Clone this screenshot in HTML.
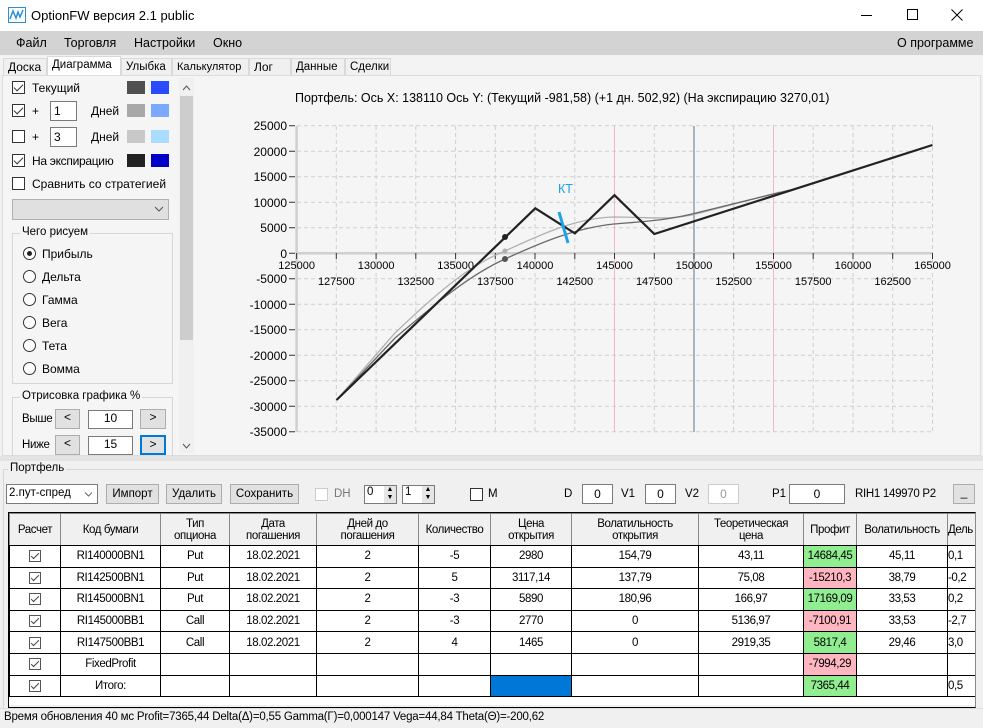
<!DOCTYPE html>
<html><head><meta charset="utf-8"><style>
*{box-sizing:border-box;margin:0;padding:0}
body{width:983px;height:728px;overflow:hidden;background:#f0f0f0;font-family:"Liberation Sans","DejaVu Sans",sans-serif;font-size:12px;color:#000;position:relative}
.a{position:absolute}
.cb{position:absolute;width:13px;height:13px;border:1px solid #333;background:#fff}
.cb.on::after{content:"";position:absolute;left:3px;top:0px;width:4px;height:8px;border:solid #333;border-width:0 1.5px 1.5px 0;transform:rotate(45deg)}
.tc{display:inline-block;position:relative;width:12px;height:12px;border:1px solid #555;background:#fff;vertical-align:middle}
.tc::after{content:"";position:absolute;left:3px;top:0px;width:3px;height:7px;border:solid #444;border-width:0 1px 1px 0;transform:rotate(45deg)}
.rb{position:absolute;width:13px;height:13px;border:1px solid #333;border-radius:50%;background:#fff}
.rb.on::after{content:"";position:absolute;left:3px;top:3px;width:5px;height:5px;border-radius:50%;background:#222}
.sw{position:absolute;width:18px;height:13px}
.inp{position:absolute;background:#fff;border:1px solid #7a7a7a;text-align:center;font-size:12px}
.btn{position:absolute;background:#e1e1e1;border:1px solid #adadad;text-align:center;font-size:12px}
.tab{position:absolute;top:58px;height:17px;border:1px solid #d9d9d9;border-bottom:none;background:#f0f0f0;font-size:12px;line-height:16px;padding:0 4px}
table{border-collapse:collapse;table-layout:fixed;font-size:11.5px}
td{border:1px solid #000;text-align:center;height:21.6px;background:#fff;white-space:nowrap;overflow:hidden;letter-spacing:-0.4px}
th{border:1px solid #888;font-weight:normal;background:#f0f0f0;height:32px;font-size:11.5px;line-height:12px;letter-spacing:-0.4px;border-bottom:1px solid #000}
.g{background:#90ee90}.r{background:#ffb6c1}
</style></head><body>
<div class="a" style="left:0;top:0;width:983px;height:31px;background:#fff"></div>
<svg class="a" style="left:8px;top:7px" width="18" height="16" viewBox="0 0 18 16"><rect x="0.5" y="0.5" width="17" height="15" fill="#fff" stroke="#2a8fd8"/><path d="M2 12 L5 4 L8 11 L10 5 L12 10 L15 3" stroke="#2a8fd8" stroke-width="1.5" fill="none"/></svg>
<div class="a" style="left:31px;top:8px;font-size:13px">OptionFW версия 2.1 public</div>
<div class="a" style="left:861px;top:15px;width:11px;height:1px;background:#000"></div>
<div class="a" style="left:907px;top:9px;width:11px;height:11px;border:1px solid #000"></div>
<svg class="a" style="left:951px;top:9px" width="12" height="12"><path d="M0.5 0.5L11.5 11.5M11.5 0.5L0.5 11.5" stroke="#000"/></svg>
<div class="a" style="left:0;top:31px;width:983px;height:24px;background:#d3d3d3"></div>
<div class="a" style="left:16px;top:36px;font-size:12.5px">Файл</div>
<div class="a" style="left:64px;top:36px;font-size:12.5px">Торговля</div>
<div class="a" style="left:134px;top:36px;font-size:12.5px">Настройки</div>
<div class="a" style="left:213px;top:36px;font-size:12.5px">Окно</div>
<div class="a" style="left:897px;top:36px;font-size:12.5px">О программе</div>
<div class="a" style="left:0;top:55px;width:983px;height:20px;background:#f3f3f3"></div>
<div class="tab" style="left:3px;width:44px">Доска</div>
<div class="tab" style="left:47px;top:56px;height:20px;width:74px;background:#fff;font-size:11.5px">Диаграмма</div>
<div class="tab" style="left:121px;width:51px;font-size:11.5px">Улыбка</div>
<div class="tab" style="left:172px;width:77px;font-size:11px">Калькулятор</div>
<div class="tab" style="left:249px;width:42px">Лог</div>
<div class="tab" style="left:291px;width:54px;font-size:11.5px">Данные</div>
<div class="tab" style="left:345px;width:46px;font-size:11.5px">Сделки</div>
<div class="a" style="left:2px;top:75px;width:979px;height:381px;background:#f5f5f5;border:1px solid #ddd"></div>
<div class="cb on" style="left:12px;top:81px"></div><div class="a" style="left:32px;top:81px">Текущий</div>
<div class="sw" style="left:127px;top:81px;background:#505050"></div><div class="sw" style="left:151px;top:81px;background:#2a4cff"></div>
<div class="cb on" style="left:12px;top:104px"></div><div class="a" style="left:32px;top:104px">+</div>
<div class="inp" style="left:50px;top:101px;width:27px;height:20px;text-align:left;padding-left:3px;line-height:18px">1</div>
<div class="a" style="left:91px;top:104px">Дней</div>
<div class="sw" style="left:127px;top:104px;background:#a8a8a8"></div><div class="sw" style="left:151px;top:104px;background:#7aa9ff"></div>
<div class="cb" style="left:12px;top:130px"></div><div class="a" style="left:32px;top:130px">+</div>
<div class="inp" style="left:50px;top:127px;width:27px;height:20px;text-align:left;padding-left:3px;line-height:18px">3</div>
<div class="a" style="left:91px;top:130px">Дней</div>
<div class="sw" style="left:127px;top:130px;background:#c8c8c8"></div><div class="sw" style="left:151px;top:130px;background:#aadcff"></div>
<div class="cb on" style="left:12px;top:154px"></div><div class="a" style="left:32px;top:154px;letter-spacing:-0.3px">На экспирацию</div>
<div class="sw" style="left:127px;top:154px;background:#222"></div><div class="sw" style="left:151px;top:154px;background:#0000c8"></div>
<div class="cb" style="left:12px;top:177px"></div><div class="a" style="left:32px;top:177px">Сравнить со стратегией</div>
<div class="a" style="left:12px;top:199px;width:157px;height:21px;background:#e0e0e0;border:1px solid #b0b0b0"></div>
<svg class="a" style="left:154px;top:206px" width="10" height="6"><path d="M1 1L5 5L9 1" stroke="#555" fill="none"/></svg>
<div class="a" style="left:12px;top:233px;width:161px;height:151px;border:1px solid #d6d6d6"></div>
<div class="a" style="left:20px;top:226px;background:#f5f5f5;padding:0 2px;font-size:11.5px">Чего рисуем</div>
<div class="rb on" style="left:23px;top:247px"></div><div class="a" style="left:42px;top:247px">Прибыль</div>
<div class="rb" style="left:23px;top:270px"></div><div class="a" style="left:42px;top:270px">Дельта</div>
<div class="rb" style="left:23px;top:293px"></div><div class="a" style="left:42px;top:293px">Гамма</div>
<div class="rb" style="left:23px;top:316px"></div><div class="a" style="left:42px;top:316px">Вега</div>
<div class="rb" style="left:23px;top:339px"></div><div class="a" style="left:42px;top:339px">Тета</div>
<div class="rb" style="left:23px;top:362px"></div><div class="a" style="left:42px;top:362px">Вомма</div>
<div class="a" style="left:12px;top:397px;width:161px;height:60px;border:1px solid #d6d6d6;border-bottom:none"></div>
<div class="a" style="left:20px;top:390px;background:#f5f5f5;padding:0 2px;font-size:11.5px">Отрисовка графика %</div>
<div class="a" style="left:22px;top:413px;font-size:11.5px;letter-spacing:-0.3px">Выше</div>
<div class="btn" style="left:55px;top:409px;width:25px;height:20px">&lt;</div>
<div class="inp" style="left:88px;top:410px;width:45px;height:19px">10</div>
<div class="btn" style="left:140px;top:409px;width:26px;height:20px">&gt;</div>
<div class="a" style="left:22px;top:439px;font-size:11.5px;letter-spacing:-0.3px">Ниже</div>
<div class="btn" style="left:55px;top:435px;width:25px;height:20px">&lt;</div>
<div class="inp" style="left:88px;top:436px;width:45px;height:19px">15</div>
<div class="btn" style="left:140px;top:435px;width:26px;height:20px;border:2px solid #0078d7">&gt;</div>
<div class="a" style="left:179px;top:78px;width:15px;height:375px;background:#f0f0f0"></div>
<div class="a" style="left:180px;top:96px;width:13px;height:244px;background:#cdcdcd"></div>
<svg class="a" style="left:182px;top:85px" width="9" height="6"><path d="M1 5L4.5 1L8 5" stroke="#555" fill="none"/></svg>
<svg class="a" style="left:182px;top:443px" width="9" height="6"><path d="M1 1L4.5 5L8 1" stroke="#555" fill="none"/></svg>
<svg class="a" style="left:0;top:0" width="983" height="460" font-family="Liberation Sans, sans-serif" font-size="12">
<text x="295" y="102" font-size="12.5">Портфель: Ось X: 138110 Ось Y:  (Текущий -981,58)  (+1 дн. 502,92)  (На экспирацию 3270,01)</text>
<g stroke="#cfcfcf" stroke-dasharray="4,3" stroke-width="1">
<path d="M336.3 126V432M376.1 126V432M415.8 126V432M455.6 126V432M495.3 126V432M535 126V432M574.8 126V432M654.3 126V432M733.7 126V432M813.2 126V432M853 126V432M892.7 126V432M932.5 126V432"/>
<path d="M297 125.8H933M297 151.3H933M297 176.8H933M297 202.3H933M297 227.8H933M297 278.8H933M297 304.3H933M297 329.8H933M297 355.3H933M297 380.8H933M297 406.3H933M297 431.8H933"/>
</g>
<path d="M614.5 126V432M773.5 126V432" stroke="#f4b8c0"/>
<path d="M694 126V432" stroke="#7a8a9a" stroke-width="1.2"/>
<path d="M296.6 126V432M296 253.3H933" stroke="#d0d0d0" stroke-width="2.5"/>
<g stroke="#333"><path d="M289 125.8h6M289 151.3h6M289 176.8h6M289 202.3h6M289 227.8h6M289 253.3h6M289 278.8h6M289 304.3h6M289 329.8h6M289 355.3h6M289 380.8h6M289 406.3h6M289 431.8h6"/>
<path d="M296.6 253v6M336.3 253v6M376.1 253v6M415.8 253v6M455.6 253v6M495.3 253v6M535 253v6M574.8 253v6M614.5 253v6M654.3 253v6M694 253v6M733.7 253v6M773.5 253v6M813.2 253v6M853 253v6M892.7 253v6M932.5 253v6"/></g>
<g text-anchor="end" font-size="12"><text x="287" y="130">25000</text><text x="287" y="156">20000</text><text x="287" y="181">15000</text><text x="287" y="207">10000</text><text x="287" y="232">5000</text><text x="287" y="258">0</text><text x="287" y="283">-5000</text><text x="287" y="309">-10000</text><text x="287" y="334">-15000</text><text x="287" y="360">-20000</text><text x="287" y="385">-25000</text><text x="287" y="411">-30000</text><text x="287" y="436">-35000</text></g>
<g text-anchor="middle" font-size="11"><text x="296.6" y="269">125000</text><text x="376.1" y="269">130000</text><text x="455.6" y="269">135000</text><text x="535" y="269">140000</text><text x="614.5" y="269">145000</text><text x="694" y="269">150000</text><text x="773.5" y="269">155000</text><text x="853" y="269">160000</text><text x="932.5" y="269">165000</text>
<text x="336.3" y="285">127500</text><text x="415.8" y="285">132500</text><text x="495.3" y="285">137500</text><text x="574.8" y="285">142500</text><text x="654.3" y="285">147500</text><text x="733.7" y="285">152500</text><text x="813.2" y="285">157500</text><text x="892.7" y="285">162500</text></g>
<path d="M336.5 400 L395 333 C440 290 470 265 505 251 C540 235 575 218 614 217 C650 217 670 221 700 213 L780 192" stroke="#b0b0b0" stroke-width="1.3" fill="none"/>
<path d="M336.5 400 L395 338 C440 300 470 275 505 259 C540 243 575 228 614 224 C650 221 670 220 700 212 L790 190" stroke="#6a6a6a" stroke-width="1.3" fill="none"/>
<path d="M336.5 400 L535.3 208.3 L574.9 233.4 L614.5 195.2 L654.3 234 L932.5 145" stroke="#222" stroke-width="2.2" fill="none"/>
<circle cx="505" cy="237" r="3" fill="#222"/><circle cx="505" cy="251" r="2.5" fill="#b0b0b0"/><circle cx="505" cy="259" r="3" fill="#555"/>
<path d="M559 212 L568 243" stroke="#1aa3e6" stroke-width="3"/>
<text x="558" y="193" fill="#1aa3e6" font-size="12.5">КТ</text>
</svg>
<div class="a" style="left:0;top:456px;width:983px;height:5px;background:#e3e3e3"></div>
<div class="a" style="left:0;top:461px;width:983px;height:247px;background:#f0f0f0"></div>
<div class="a" style="left:3px;top:469px;width:980px;height:240px;border:1px solid #d6d6d6;border-right:none;border-bottom:none"></div>
<div class="a" style="left:8px;top:462px;background:#f0f0f0;padding:0 2px;font-size:11.5px">Портфель</div>
<div class="a" style="left:6px;top:484px;width:92px;height:20px;background:#fff;border:1px solid #7a7a7a;font-size:11.5px;padding:2px 2px">2.пут-спред</div>
<svg class="a" style="left:84px;top:492px" width="9" height="5"><path d="M1 0.5L4.5 4L8 0.5" stroke="#666" fill="none"/></svg>
<div class="btn" style="left:106px;top:484px;width:53px;height:20px;line-height:18px;font-size:11.5px">Импорт</div>
<div class="btn" style="left:166px;top:484px;width:56px;height:20px;line-height:18px;font-size:11.5px">Удалить</div>
<div class="btn" style="left:230px;top:484px;width:69px;height:20px;line-height:18px;font-size:11.5px">Сохранить</div>
<div class="cb" style="left:315px;top:488px;border-color:#ccc"></div><div class="a" style="left:334px;top:488px;color:#777;font-size:11.5px">DH</div>
<div class="inp" style="left:364px;top:485px;width:33px;height:19px;text-align:left;padding-left:2px;font-size:11.5px">0</div><div class="a" style="left:384px;top:486px;width:12px;height:17px;background:#e5e5e5;font-size:7px;line-height:8px;text-align:center">▲<br>▼</div>
<div class="inp" style="left:402px;top:485px;width:33px;height:19px;text-align:left;padding-left:2px;font-size:11.5px">1</div><div class="a" style="left:422px;top:486px;width:12px;height:17px;background:#e5e5e5;font-size:7px;line-height:8px;text-align:center">▲<br>▼</div>
<div class="cb" style="left:470px;top:488px"></div><div class="a" style="left:488px;top:488px;font-size:11.5px">M</div>
<div class="a" style="left:564px;top:488px;font-size:11.5px">D</div><div class="inp" style="left:582px;top:484px;width:31px;height:20px;line-height:18px">0</div>
<div class="a" style="left:621px;top:488px;font-size:11.5px">V1</div><div class="inp" style="left:645px;top:484px;width:31px;height:20px;line-height:18px">0</div>
<div class="a" style="left:685px;top:488px;font-size:11.5px">V2</div><div class="inp" style="left:708px;top:484px;width:31px;height:20px;line-height:18px;border-color:#ccc;color:#999">0</div>
<div class="a" style="left:772px;top:488px;font-size:11.5px">P1</div><div class="inp" style="left:789px;top:484px;width:56px;height:20px;line-height:18px">0</div>
<div class="a" style="left:855px;top:488px;font-size:11.5px;letter-spacing:-0.3px">RIH1 149970  P2</div>
<div class="btn" style="left:953px;top:484px;width:22px;height:20px">_</div>
<div class="a" style="left:8px;top:512px;width:968px;height:196px;background:#f0f0f0;border:1px solid #000;border-right:1px solid #888;overflow:hidden">
<table style="width:982px">
<colgroup><col style="width:51px"><col style="width:100px"><col style="width:69px"><col style="width:87px"><col style="width:102px"><col style="width:72px"><col style="width:81px"><col style="width:127px"><col style="width:105px"><col style="width:53px"><col style="width:91px"><col style="width:44px"></colgroup>
<tr><th>Расчет</th><th>Код бумаги</th><th>Тип<br>опциона</th><th>Дата<br>погашения</th><th>Дней до<br>погашения</th><th>Количество</th><th>Цена<br>открытия</th><th>Волатильность<br>открытия</th><th>Теоретическая<br>цена</th><th>Профит</th><th>Волатильность</th><th style="text-align:left">Дель</th></tr>
<tr><td><i class="tc"></i></td><td>RI140000BN1</td><td>Put</td><td>18.02.2021</td><td>2</td><td>-5</td><td>2980</td><td>154,79</td><td>43,11</td><td class="g">14684,45</td><td>45,11</td><td style="text-align:left">0,1</td></tr>
<tr><td><i class="tc"></i></td><td>RI142500BN1</td><td>Put</td><td>18.02.2021</td><td>2</td><td>5</td><td>3117,14</td><td>137,79</td><td>75,08</td><td class="r">-15210,3</td><td>38,79</td><td style="text-align:left">-0,2</td></tr>
<tr><td><i class="tc"></i></td><td>RI145000BN1</td><td>Put</td><td>18.02.2021</td><td>2</td><td>-3</td><td>5890</td><td>180,96</td><td>166,97</td><td class="g">17169,09</td><td>33,53</td><td style="text-align:left">0,2</td></tr>
<tr><td><i class="tc"></i></td><td>RI145000BB1</td><td>Call</td><td>18.02.2021</td><td>2</td><td>-3</td><td>2770</td><td>0</td><td>5136,97</td><td class="r">-7100,91</td><td>33,53</td><td style="text-align:left">-2,7</td></tr>
<tr><td><i class="tc"></i></td><td>RI147500BB1</td><td>Call</td><td>18.02.2021</td><td>2</td><td>4</td><td>1465</td><td>0</td><td>2919,35</td><td class="g">5817,4</td><td>29,46</td><td style="text-align:left">3,0</td></tr>
<tr><td><i class="tc"></i></td><td>FixedProfit</td><td></td><td></td><td></td><td></td><td></td><td></td><td></td><td class="r">-7994,29</td><td></td><td></td></tr>
<tr><td><i class="tc"></i></td><td>Итого:</td><td></td><td></td><td></td><td></td><td style="background:#0078d7"></td><td></td><td></td><td class="g">7365,44</td><td></td><td style="text-align:left">0,5</td></tr>
</table>
<div style="height:8px;background:#fff"></div>
</div>
<div class="a" style="left:0;top:708px;width:983px;height:20px;background:#f0f0f0;border-top:1px solid #ddd"></div>
<div class="a" style="left:4px;top:711px;font-size:11.5px;letter-spacing:-0.2px">Время обновления 40 мс  Profit=7365,44 Delta(Δ)=0,55 Gamma(Γ)=0,000147 Vega=44,84 Theta(Θ)=-200,62</div>
</body></html>
